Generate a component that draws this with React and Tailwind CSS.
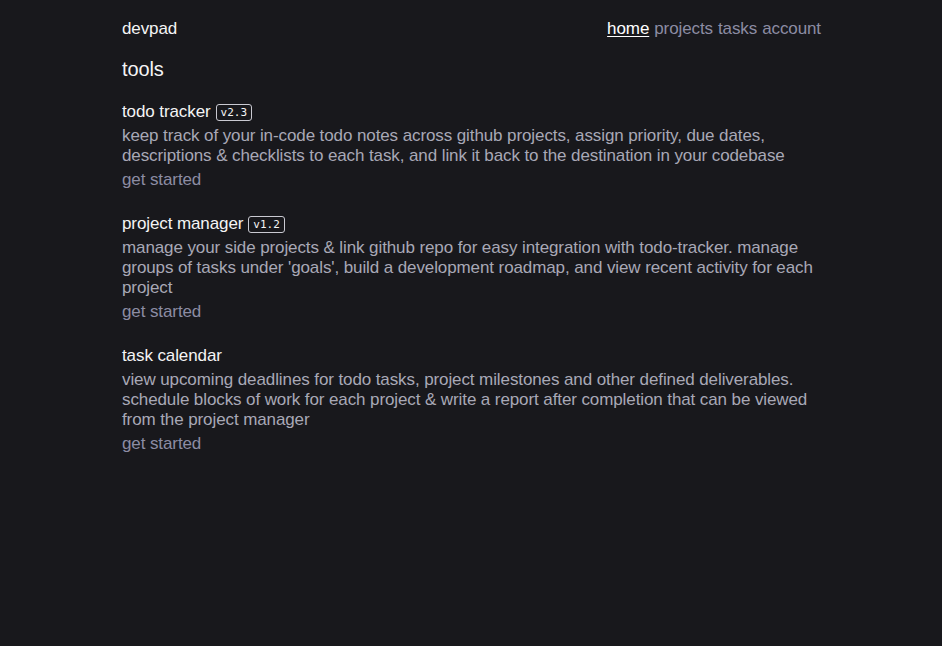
import React from 'react';

const tools = [
  {
    name: 'todo tracker',
    version: 'v2.3',
    description:
      'keep track of your in-code todo notes across github projects, assign priority, due dates, descriptions & checklists to each task, and link it back to the destination in your codebase',
  },
  {
    name: 'project manager',
    version: 'v1.2',
    description:
      "manage your side projects & link github repo for easy integration with todo-tracker. manage groups of tasks under 'goals', build a development roadmap, and view recent activity for each project",
  },
  {
    name: 'task calendar',
    description:
      'view upcoming deadlines for todo tasks, project milestones and other defined deliverables. schedule blocks of work for each project & write a report after completion that can be viewed from the project manager',
  },
];

function Badge({ children }) {
  return (
    <span className="ml-[5px] inline-flex h-[17px] items-center rounded-[3px] border border-[#c9c9d1] px-[4px] font-['DejaVu_Sans_Mono',monospace] text-[11px] leading-none tracking-normal text-[#f4f4f5]">
      {children}
    </span>
  );
}

export default function App() {
  return (
    <div className="min-h-[646px] bg-[#18181c] font-['Liberation_Sans',Arial,sans-serif] text-[17px] leading-[20px] tracking-[-0.1px] text-[#f4f4f5]">
      <div className="mx-auto w-[700px] pt-[19px] pl-[1px]">
        {/* header */}
        <header className="flex items-center justify-between">
          <span>devpad</span>
          <nav className="flex gap-[5px] text-[#8c8ca3]">
            <a className="text-white underline underline-offset-2">home</a>
            <a>projects</a>
            <a>tasks</a>
            <a>account</a>
          </nav>
        </header>

        <h1 className="mt-[20px] text-[20px] leading-[20px]">tools</h1>

        <div className="mt-[23px] flex flex-col gap-[24px]">
          {tools.map((t) => (
            <section key={t.name} className="flex flex-col gap-[4px]">
              <div className="flex items-center">
                <span>{t.name}</span>
                {t.version && <Badge>{t.version}</Badge>}
              </div>
              <p className="text-[#a8a8b6]">{t.description}</p>
              <a className="text-[#8c8ca3]">get started</a>
            </section>
          ))}
        </div>
      </div>
    </div>
  );
}
